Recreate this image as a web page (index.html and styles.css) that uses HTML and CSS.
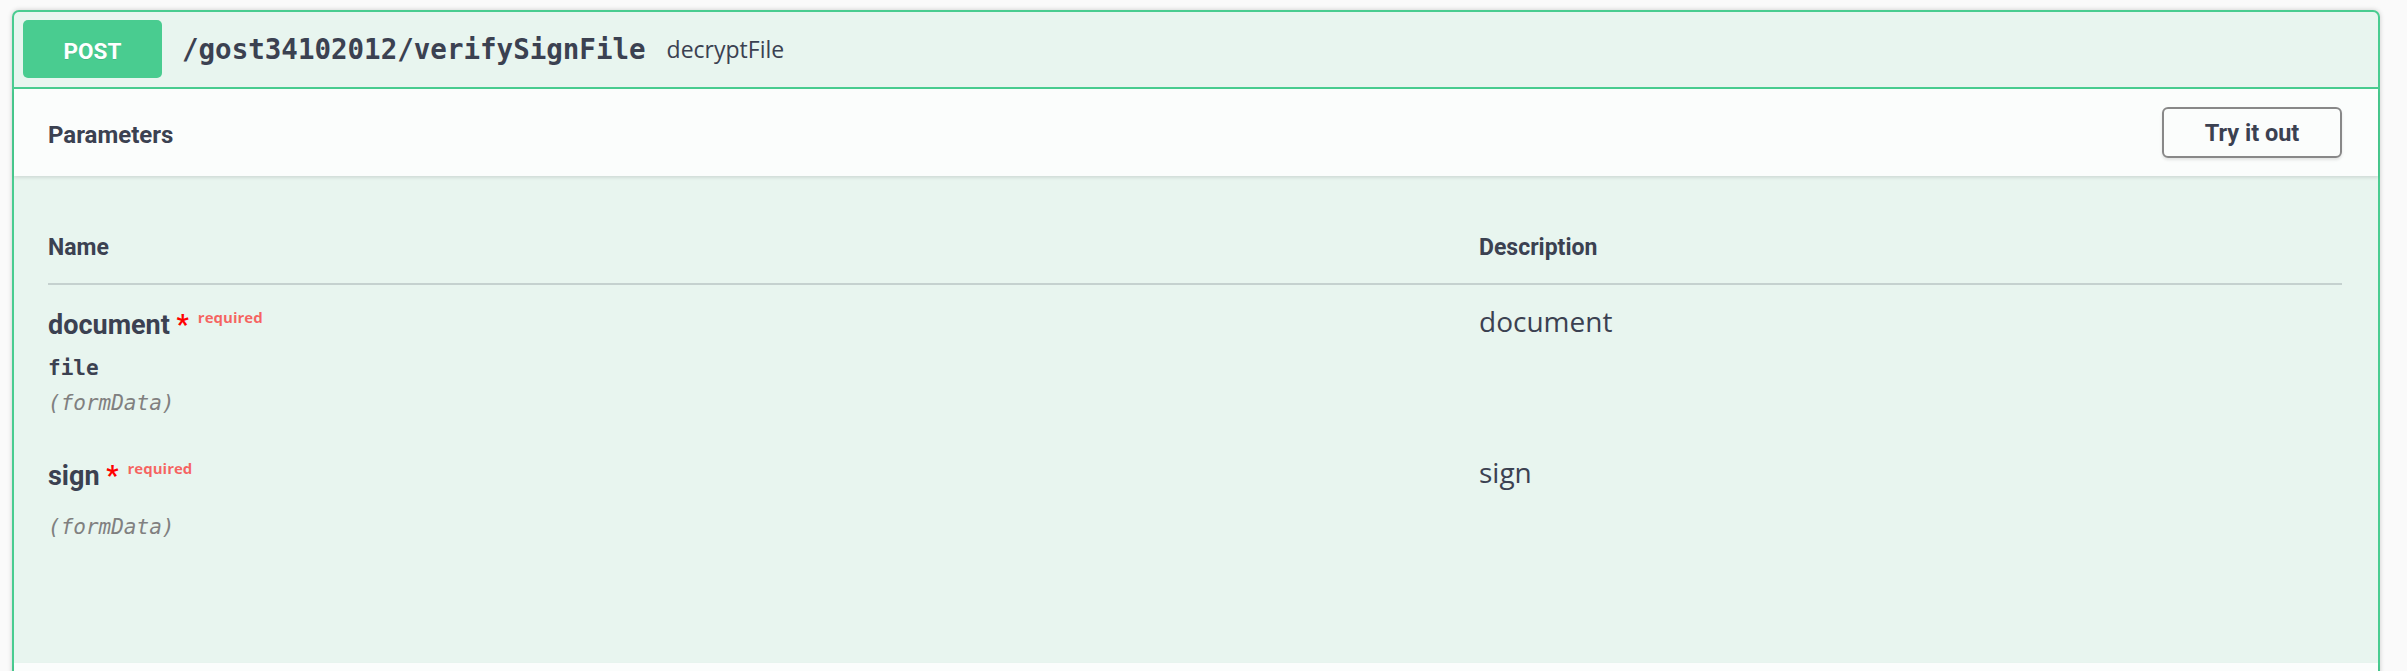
FILE: index.html
```html
<!DOCTYPE html>
<html lang="en">
<head>
<meta charset="utf-8">
<title>POST /gost34102012/verifySignFile</title>
<link rel="stylesheet" href="styles.css">
</head>
<body>
<div class="opblock">
  <div class="summary">
    <span class="method">POST</span>
    <span class="path">/gost34102012/verifySignFile</span>
    <span class="op-desc">decryptFile</span>
  </div>
  <div class="section-header">
    <h4 class="section-title">Parameters</h4>
    <button class="try-btn" type="button">Try it out</button>
  </div>
  <div class="params">
    <div class="params-table">
      <div class="th">Name</div>
      <div class="th">Description</div>

      <div class="td">
        <div class="pname">document<span class="star">&nbsp;*</span><span class="req">required</span></div>
        <div class="ptype">file</div>
        <div class="pin">(formData)</div>
      </div>
      <div class="td"><div class="pdesc">document</div></div>

      <div class="td">
        <div class="pname">sign<span class="star">&nbsp;*</span><span class="req">required</span></div>
        <div class="ptype"></div>
        <div class="pin">(formData)</div>
      </div>
      <div class="td"><div class="pdesc">sign</div></div>
    </div>
  </div>
  <div class="section-header section-next"></div>
</div>
</body>
</html>
```

FILE: styles.css
```css
html, body {
  margin: 0;
}

body {
  background: #fafafa;
  padding: 10px 27px 0 12px;
  font-family: Roboto, "Liberation Sans", sans-serif;
  color: #3b4151;
}

.opblock {
  border: 2px solid #49cc90;
  border-radius: 7px;
  background: #e8f5ef;
  box-shadow: 0 0 5px rgba(0, 0, 0, 0.19);
}

.summary {
  display: flex;
  align-items: center;
  padding: 8px 9px 9px;
  border-bottom: 2px solid #49cc90;
}

.method {
  box-sizing: border-box;
  min-width: 139px;
  height: 58px;
  padding-top: 3px;
  display: flex;
  align-items: center;
  justify-content: center;
  background: #49cc90;
  color: #fff;
  border-radius: 5px;
  font: 700 22.5px Roboto, sans-serif;
  text-shadow: 0 1px 0 rgba(0, 0, 0, 0.1);
}

.path {
  margin-left: 20px;
  font: 600 27.5px "DejaVu Sans Mono", monospace;
  color: #3b4151;
}

.op-desc {
  margin-left: 21px;
  font: 400 23px "Open Sans", sans-serif;
  color: #3b4151;
}

.section-header {
  box-sizing: border-box;
  display: flex;
  align-items: center;
  justify-content: space-between;
  min-height: 87px;
  padding: 0 36px 0 34px;
  background: rgba(255, 255, 255, 0.8);
  box-shadow: 0 2px 3px rgba(0, 0, 0, 0.1);
}

.section-title {
  margin: 0;
  padding-top: 4px;
  font: 700 24px Roboto, sans-serif;
  color: #3b4151;
}

.try-btn {
  box-sizing: border-box;
  width: 180px;
  height: 51px;
  padding: 0;
  border: 2px solid #888;
  border-radius: 6px;
  background: transparent;
  box-shadow: 0 2px 3px rgba(0, 0, 0, 0.1);
  font: 700 23.5px Roboto, sans-serif;
  color: #3b4151;
}

.params {
  padding: 35px 36px 103px 34px;
}

.params-table {
  display: grid;
  grid-template-columns: 1431px 1fr;
}

.th {
  padding: 21px 0 20px;
  border-bottom: 2px solid rgba(59, 65, 81, 0.2);
  font: 700 23px/31px Roboto, sans-serif;
}

.td {
  padding: 14px 0 15px;
}

.pname {
  font: 700 27px/52px Roboto, sans-serif;
  white-space: nowrap;
}

.star {
  color: #f00;
}

.req {
  position: relative;
  top: -11px;
  padding-left: 9px;
  font: 700 15px "Open Sans", sans-serif;
  color: rgba(255, 0, 0, 0.6);
}

.ptype {
  padding: 4px 0;
  font: 600 21px/27px "DejaVu Sans Mono", monospace;
}

.pin {
  font: italic 400 21px/35px "DejaVu Sans Mono", monospace;
  color: gray;
}

.pdesc {
  font: 400 28px/44px "Open Sans", sans-serif;
}
```
